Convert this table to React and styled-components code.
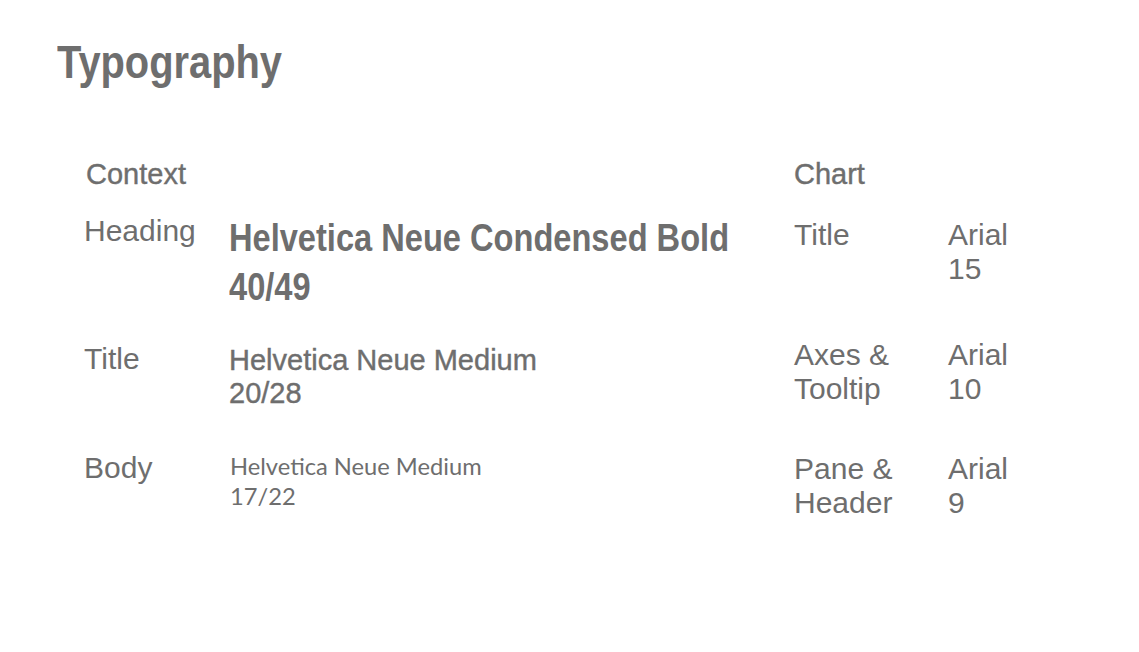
import React from "react";
import styled, { createGlobalStyle } from "styled-components";

const Global = createGlobalStyle`
  html, body { margin: 0; padding: 0; background: #ffffff; }
  body { font-family: "Liberation Sans", Arial, sans-serif; color: #6e6e6e; }
`;

const Page = styled.div`
  width: 1139px;
  height: 652px;
  box-sizing: border-box;
  padding: 35px 0 0 57px;
  background: #ffffff;
`;

/* Condensed bold face emulated by horizontally compressing Liberation Sans Bold */
const Condensed = styled.span`
  display: inline-block;
  white-space: nowrap;
  transform: scaleX(${(p) => p.$scale});
  transform-origin: left top;
`;

const PageTitle = styled.h1`
  margin: 0;
  font-family: "Liberation Sans", Arial, sans-serif;
  font-weight: 700;
  font-size: 46px;
  line-height: 54px;
  color: #6e6e6e;
`;

const Tables = styled.div`
  display: flex;
  margin: 69px 0 0 26px;
`;

const Section = styled.div`
  display: grid;
  grid-template-columns: ${(p) => p.$cols};
  grid-template-rows: ${(p) => p.$rows};
  width: ${(p) => p.$width};
  align-items: start;
`;

const GroupHead = styled.div`
  grid-column: 1 / -1;
  padding-left: ${(p) => p.$indent}px;
  font-size: 29px;
  line-height: 32px;
  font-weight: 400;
  -webkit-text-stroke: 0.4px #6e6e6e;
`;

const Label = styled.div`
  font-size: 30px;
  line-height: 34px;
  padding-left: 1px;
`;

const Value = styled.div`
  font-size: 30px;
  line-height: 34px;
`;

const HeadingSample = styled.div`
  font-weight: 700;
  font-size: 38px;
  line-height: 49px;
  padding-left: 1px;
`;

const TitleSample = styled.div`
  margin-top: 2px;
  font-size: 29px;
  line-height: 33px;
  padding-left: 1px;
  -webkit-text-stroke: 0.4px #6e6e6e;
`;

const BodySample = styled.div`
  font-family: Lato, "Noto Sans", sans-serif;
  font-size: 23.7px;
  line-height: 30px;
  padding-left: 2px;
`;

export default function App() {
  return (
    <Page>
      <Global />
      <PageTitle>
        <Condensed $scale={0.866}>Typography</Condensed>
      </PageTitle>
      <Tables>
        <Section $width="710px" $cols="145px auto" $rows="56px 128px 109px auto">
          <GroupHead $indent={3}>Context</GroupHead>
          <Label>Heading</Label>
          <HeadingSample>
            <Condensed $scale={0.858}>
              Helvetica Neue Condensed Bold
              <br />
              40/49
            </Condensed>
          </HeadingSample>
          <Label>Title</Label>
          <TitleSample>
            Helvetica Neue Medium
            <br />
            20/28
          </TitleSample>
          <Label>Body</Label>
          <BodySample>
            Helvetica Neue Medium
            <br />
            17/22
          </BodySample>
        </Section>
        <Section $width="300px" $cols="155px auto" $rows="60px 120px 114px auto">
          <GroupHead $indent={1}>Chart</GroupHead>
          <Label>Title</Label>
          <Value>
            Arial
            <br />
            15
          </Value>
          <Label>
            Axes &amp;
            <br />
            Tooltip
          </Label>
          <Value>
            Arial
            <br />
            10
          </Value>
          <Label>
            Pane &amp;
            <br />
            Header
          </Label>
          <Value>
            Arial
            <br />
            9
          </Value>
        </Section>
      </Tables>
    </Page>
  );
}
